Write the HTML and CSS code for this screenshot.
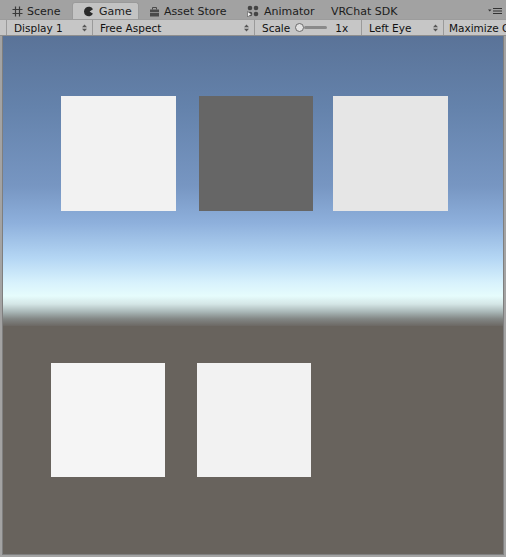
FILE: index.html
```html
<!DOCTYPE html>
<html>
<head>
<meta charset="utf-8">
<link rel="stylesheet" href="styles.css">
</head>
<body>
<div class="window">
  <div class="tabbar">
    <div class="tab t1">
      <svg class="ic" width="11" height="11" viewBox="0 0 11 11"><path d="M3.5 0.5v10M7.5 0.5v10M0.5 3.5h10M0.5 7.5h10" stroke="#3a3a3a" stroke-width="1.2" fill="none"/></svg>
      <span>Scene</span>
    </div>
    <div class="tab active">
      <svg class="ic" width="11" height="11" viewBox="0 0 11 11"><path d="M10 3.2A4.8 4.8 0 1 0 10 7.8L6.6 5.5Z" fill="#2a2a2a"/></svg>
      <span>Game</span>
    </div>
    <div class="tab t3">
      <svg class="ic" width="11" height="11" viewBox="0 0 11 11"><rect x="1" y="3.5" width="9" height="7" fill="#4a4a4a"/><path d="M3.5 3.5V1.5h4v2" stroke="#4a4a4a" fill="none"/><path d="M1 6.5h9" stroke="#8a8a8a"/></svg>
      <span>Asset Store</span>
    </div>
    <div class="tab t4">
      <svg class="ic" width="13" height="12" viewBox="0 0 13 12"><circle cx="3" cy="3" r="2.3" fill="#444"/><circle cx="9" cy="3" r="2.3" fill="#444"/><circle cx="9" cy="9" r="2.3" fill="#444"/><circle cx="3" cy="9" r="2.3" fill="#444"/><path d="M0.5 6.5v5.5l4-2.8z" fill="#f0f0f0" stroke="#555" stroke-width="0.6"/></svg>
      <span>Animator</span>
    </div>
    <div class="tab plain"><span>VRChat SDK</span></div>
    <div class="spacer"></div>
    <div class="menu">
      <svg width="14" height="8" viewBox="0 0 14 8"><path d="M0 2.5h3.5l-1.75 2z" fill="#333"/><path d="M5 1.5h9M5 4h9M5 6.5h9" stroke="#333" stroke-width="1"/></svg>
    </div>
  </div>
  <div class="toolbar">
    <div class="dd w1"><span>Display 1</span><svg class="arr" width="5" height="8" viewBox="0 0 5 8"><path d="M0 3.2L2.5 0.5 5 3.2zM0 4.8L2.5 7.5 5 4.8z" fill="#555"/></svg></div>
    <div class="dd w2"><span>Free Aspect</span><svg class="arr" width="5" height="8" viewBox="0 0 5 8"><path d="M0 3.2L2.5 0.5 5 3.2zM0 4.8L2.5 7.5 5 4.8z" fill="#555"/></svg></div>
    <div class="scale">
      <span>Scale</span>
      <div class="slider"><div class="knob"></div><div class="track"></div></div>
      <span class="val">1x</span>
    </div>
    <div class="dd w3"><span>Left Eye</span><svg class="arr" width="5" height="8" viewBox="0 0 5 8"><path d="M0 3.2L2.5 0.5 5 3.2zM0 4.8L2.5 7.5 5 4.8z" fill="#555"/></svg></div>
    <div class="btn"><span>Maximize On Play</span></div>
  </div>
  <div class="view">
    <div class="sky">
      <div class="row top">
        <div class="sq c1"></div>
        <div class="sq c2"></div>
        <div class="sq c3"></div>
      </div>
    </div>
    <div class="ground">
      <div class="row bottom">
        <div class="sq c4"></div>
        <div class="sq c5"></div>
      </div>
    </div>
  </div>
</div>
</body>
</html>
```
FILE: styles.css
```css
html, body {
  margin: 0;
  padding: 0;
  background: #a3a3a3;
}
.window {
  width: 506px;
  height: 557px;
  display: flex;
  flex-direction: column;
  font-family: "DejaVu Sans", "Liberation Sans", sans-serif;
  color: #111;
  overflow: hidden;
}
.tabbar {
  height: 19px;
  display: flex;
  align-items: flex-end;
  background: #a2a2a2;
  flex-shrink: 0;
}
.tab {
  height: 16px;
  display: flex;
  align-items: center;
  gap: 4px;
  font-size: 11px;
  color: #1c1c1c;
  box-sizing: border-box;
  white-space: nowrap;
  flex-shrink: 0;
}
.t1 { padding-left: 12px; width: 72px; }
.tab.active {
  background: #c3c3c3;
  border: 1px solid #9a9a9a;
  border-bottom: none;
  border-radius: 3px 3px 0 0;
  height: 17px;
  width: 67px;
  padding-left: 10px;
  gap: 5px;
}
.t3 { padding-left: 10px; width: 100px; }
.t4 { padding-left: 8px; width: 88px; }
.tab.plain { padding-left: 4px; }
.ic { flex-shrink: 0; }
.spacer { flex: 1; }
.menu {
  height: 16px;
  display: flex;
  align-items: center;
  padding-right: 4px;
}
.toolbar {
  height: 17px;
  display: flex;
  background: #c6c6c6;
  border-top: 1px solid #9c9c9c;
  border-bottom: 1px solid #8e8e8e;
  box-sizing: border-box;
  flex-shrink: 0;
  font-size: 10.5px;
  padding-left: 6px;
}
.dd, .scale, .btn {
  display: flex;
  align-items: center;
  border-right: 1px solid #9a9a9a;
  box-sizing: border-box;
  padding: 0 5px 0 7px;
  white-space: nowrap;
}
.dd { justify-content: space-between; }
.w1 { width: 87px; border-left: 1px solid #9a9a9a; }
.w2 { width: 162px; }
.w3 { width: 82px; }
.arr { flex-shrink: 0; }
.scale {
  width: 107px;
  gap: 5px;
}
.slider {
  display: flex;
  align-items: center;
  width: 32px;
}
.knob {
  width: 9px;
  height: 9px;
  border-radius: 50%;
  background: #e2e2e2;
  border: 1px solid #6a6a6a;
  box-sizing: border-box;
  flex-shrink: 0;
}
.track {
  height: 3px;
  flex: 1;
  background: #8a8a8a;
  border-radius: 2px;
}
.val { margin-left: 3px; }
.btn {
  flex: 1;
  overflow: hidden;
  padding-left: 5px;
  border-right: none;
}
.view {
  flex: 1;
  display: flex;
  flex-direction: column;
  margin: 0 2px 2px 2px;
  border: 1px solid #7f7f7f;
  border-top: none;
}
.sky {
  height: 290px;
  background: linear-gradient(to bottom,
    #5a7398 0px,
    #6482ab 70px,
    #7796c2 150px,
    #8eb0dc 187px,
    #b4d6f4 222px,
    #d8f2fc 247px,
    #e6fcfc 260px,
    #d4e6e6 268px,
    #a8b6b6 276px,
    #828684 283px,
    #6c6864 290px);
}
.ground {
  flex: 1;
  background: #68635d;
}
.row {
  display: flex;
}
.top {
  padding: 60px 0 0 58px;
  gap: 23px;
}
.bottom {
  padding: 37px 0 0 48px;
  gap: 32px;
}
.sq {
  width: 115px;
  height: 115px;
}
.c1 { background: #f2f2f2; }
.c2 { background: #666666; width: 114px; }
.c3 { background: #e6e6e6; margin-left: -3px; }
.c4 { background: #f5f5f5; width: 114px; height: 114px; }
.c5 { background: #f2f2f2; width: 114px; height: 114px; }
```
